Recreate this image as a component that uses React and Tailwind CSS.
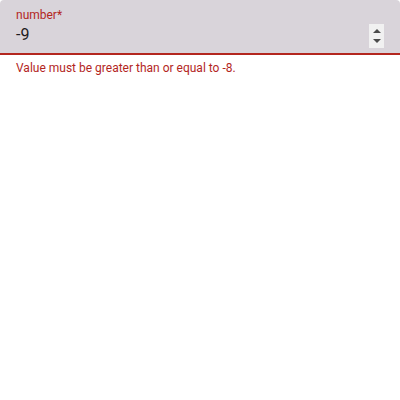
export default function App() {
  return (
    <div className="w-[400px] h-[400px] bg-white" style={{ fontFamily: "Roboto, sans-serif" }}>
      <div className="relative h-[55px] bg-[#d9d4da] rounded-t-[4px] border-b-2 border-[#b3261e] px-4">
        <div className="pt-[7px] text-[12px] leading-[16px] text-[#b3261e]">number*</div>
        <div className="text-[16px] leading-[24px] text-[#1d1b20]">-9</div>
        <div className="absolute left-[369px] top-[24px] w-[15px] h-[24px] bg-[#f1f1f1] flex flex-col items-center justify-center gap-[6px]">
          <svg width="8" height="4" viewBox="0 0 8 4"><path d="M0 4L4 0L8 4Z" fill="#4b4b4b" /></svg>
          <svg width="8" height="4" viewBox="0 0 8 4"><path d="M0 0L8 0L4 4Z" fill="#4b4b4b" /></svg>
        </div>
      </div>
      <div className="px-4 pt-[5px] text-[12px] leading-[16px] text-[#b3261e]">Value must be greater than or equal to -8.</div>
    </div>
  );
}
